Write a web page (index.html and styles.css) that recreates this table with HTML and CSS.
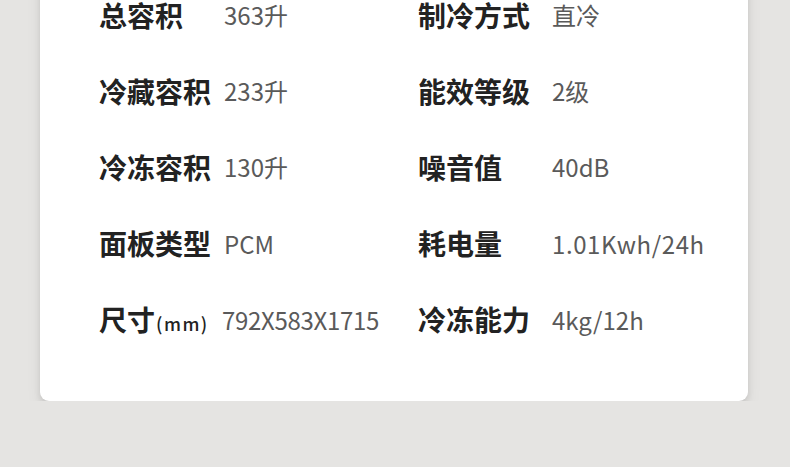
FILE: index.html
```html
<!DOCTYPE html>
<html lang="zh-CN">
<head>
  <meta charset="UTF-8">
  <meta name="viewport" content="width=device-width, initial-scale=1.0">
  <title>冰箱参数</title>
  <link rel="stylesheet" href="styles.css">
</head>
<body>
  <div class="card">
    <div class="specs">
      <div class="label">总容积</div>
      <div class="value">363升</div>
      <div class="label">制冷方式</div>
      <div class="value">直冷</div>

      <div class="label">冷藏容积</div>
      <div class="value">233升</div>
      <div class="label">能效等级</div>
      <div class="value">2级</div>

      <div class="label">冷冻容积</div>
      <div class="value">130升</div>
      <div class="label">噪音值</div>
      <div class="value">40dB</div>

      <div class="label">面板类型</div>
      <div class="value">PCM</div>
      <div class="label">耗电量</div>
      <div class="value wide">1.01Kwh/24h</div>

      <div class="label">尺寸<span class="unit">(mm)</span></div>
      <div class="value tight">792X583X1715</div>
      <div class="label">冷冻能力</div>
      <div class="value">4kg/12h</div>
    </div>
  </div>
</body>
</html>
```

FILE: styles.css
```css
body {
  margin: 0;
  padding: 0;
  background-color: #e5e4e2;
  font-family: "Noto Sans CJK SC", "Noto Sans", sans-serif;
  overflow: hidden;
}

.card {
  margin: -40px 42px 0 40px;
  padding: 16.5px 0 44px 59px;
  background-color: #fff;
  border-radius: 0 0 9px 9px;
  box-shadow: 0 3px 6px rgba(0, 0, 0, 0.1), 0 8px 16px rgba(0, 0, 0, 0.06);
}

.specs {
  display: grid;
  grid-template-columns: 125px 194px 134px 1fr;
  grid-auto-rows: 76.2px;
  align-items: center;
}

.label {
  font-size: 28px;
  font-weight: 700;
  color: #222;
  white-space: nowrap;
}

.label .unit {
  font-size: 18px;
  font-weight: 500;
  letter-spacing: 1.5px;
  margin-left: 1px;
}

.value {
  font-size: 24px;
  font-weight: 400;
  color: #5a5a5a;
  white-space: nowrap;
}

.value.wide {
  letter-spacing: 0.6px;
}

.value.tight {
  margin-left: -2px;
  letter-spacing: -0.3px;
}
```
